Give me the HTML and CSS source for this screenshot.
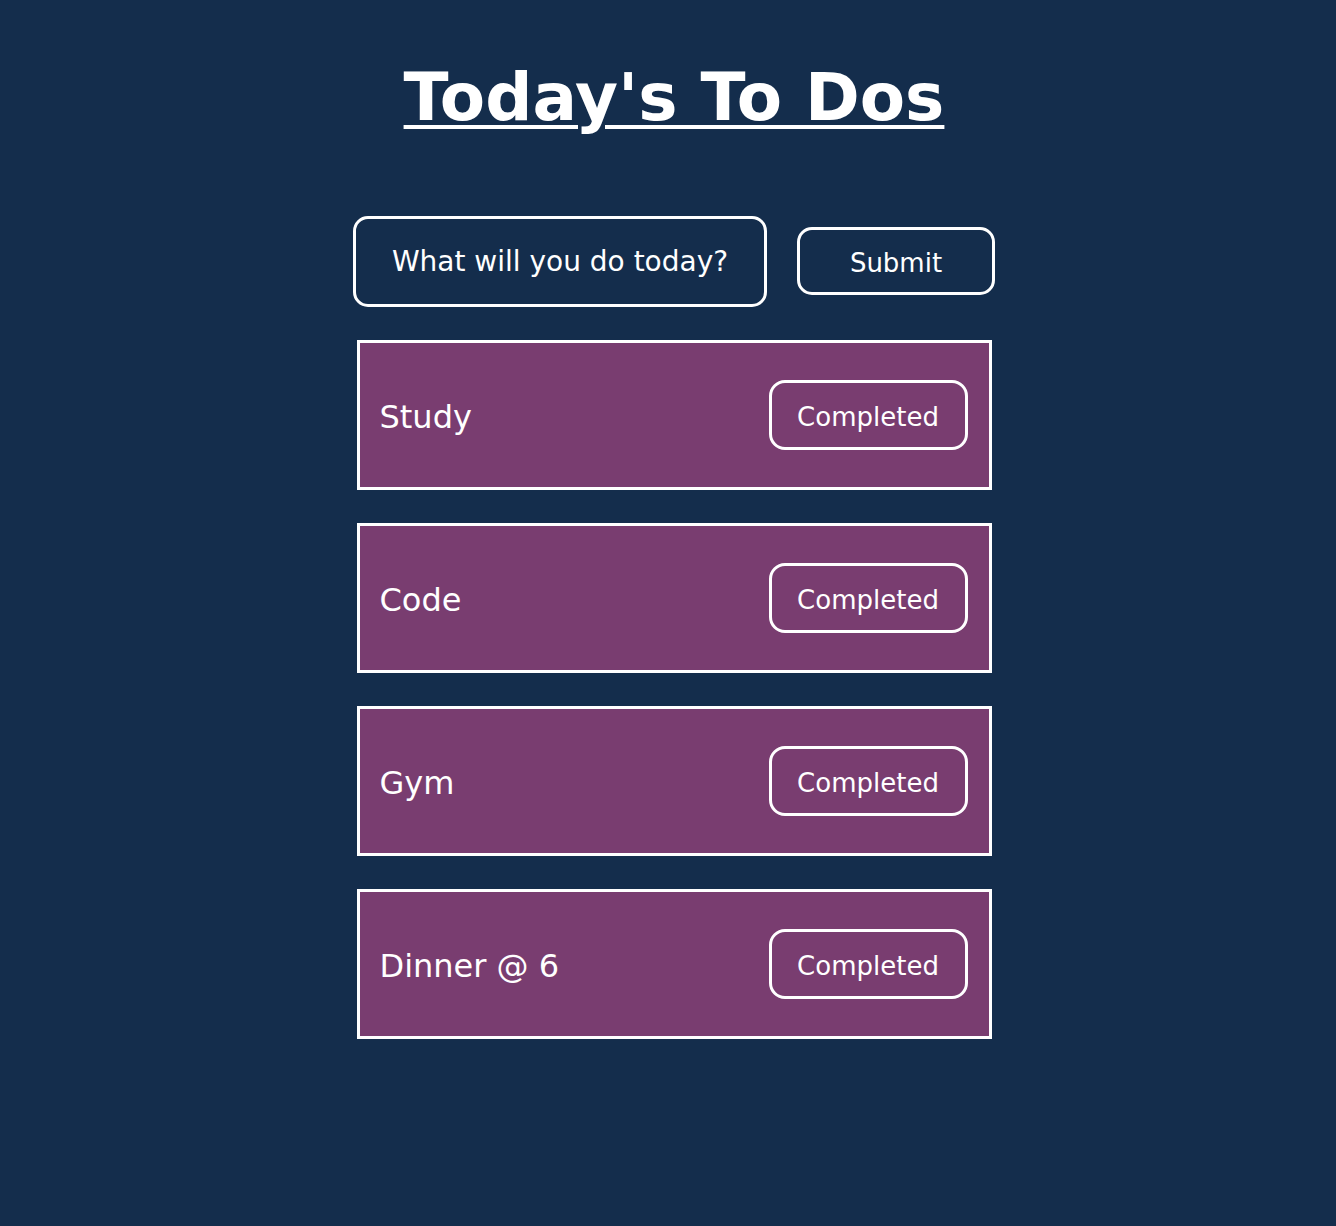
FILE: index.html
```html
<!DOCTYPE html>
<html lang="en">
<head>
<meta charset="utf-8">
<title>Today's To Dos</title>
<link rel="stylesheet" href="styles.css">
</head>
<body>
<main class="app">
  <h1 class="title">Today's To Dos</h1>
  <form class="entry">
    <input class="entry-input" type="text" placeholder="What will you do today?">
    <button class="btn btn-submit" type="button">Submit</button>
  </form>
  <ul class="todos">
    <li class="todo"><span class="todo-text">Study</span><button class="btn btn-complete" type="button">Completed</button></li>
    <li class="todo"><span class="todo-text">Code</span><button class="btn btn-complete" type="button">Completed</button></li>
    <li class="todo"><span class="todo-text">Gym</span><button class="btn btn-complete" type="button">Completed</button></li>
    <li class="todo"><span class="todo-text">Dinner @ 6</span><button class="btn btn-complete" type="button">Completed</button></li>
  </ul>
</main>
</body>
</html>
```
FILE: styles.css
```css
html, body {
  margin: 0;
  padding: 0;
}

body {
  background: #142d4c;
  color: #ffffff;
  font-family: "DejaVu Sans", Verdana, sans-serif;
  min-height: 1226px;
}

.app {
  display: flex;
  flex-direction: column;
  align-items: center;
  padding-left: 12px;
}

.title {
  margin: 60px 0 79px;
  font-size: 66px;
  font-weight: bold;
  line-height: 76.8px;
  text-decoration: underline;
  text-decoration-thickness: 4px;
  text-underline-offset: 5px;
}

.entry {
  display: flex;
  align-items: center;
  gap: 30px;
  margin: 0 0 33px;
}

.entry-input {
  box-sizing: border-box;
  width: 414px;
  height: 91px;
  border: 3px solid #ffffff;
  border-radius: 15px;
  background: transparent;
  color: #ffffff;
  font-family: "DejaVu Sans", Verdana, sans-serif;
  font-size: 28px;
  text-align: center;
  padding: 0;
  outline: none;
}

.entry-input::placeholder {
  color: #ffffff;
  opacity: 1;
}

.btn {
  box-sizing: border-box;
  border: 3px solid #ffffff;
  background: transparent;
  color: #ffffff;
  font-family: "DejaVu Sans", Verdana, sans-serif;
  font-size: 26px;
  padding: 4px 0 0;
  cursor: pointer;
}

.btn-submit {
  width: 198px;
  height: 68px;
  border-radius: 15px;
}

.todos {
  list-style: none;
  margin: 0;
  padding: 0;
  display: flex;
  flex-direction: column;
  gap: 33px;
}

.todo {
  box-sizing: border-box;
  width: 635px;
  height: 150px;
  border: 3px solid #ffffff;
  background: #793d70;
  display: flex;
  align-items: center;
  justify-content: space-between;
  padding: 0 21px 0 20px;
}

.todo-text {
  font-size: 32px;
  padding-top: 4px;
}

.btn-complete {
  width: 199px;
  height: 70px;
  border-radius: 16px;
}
```
